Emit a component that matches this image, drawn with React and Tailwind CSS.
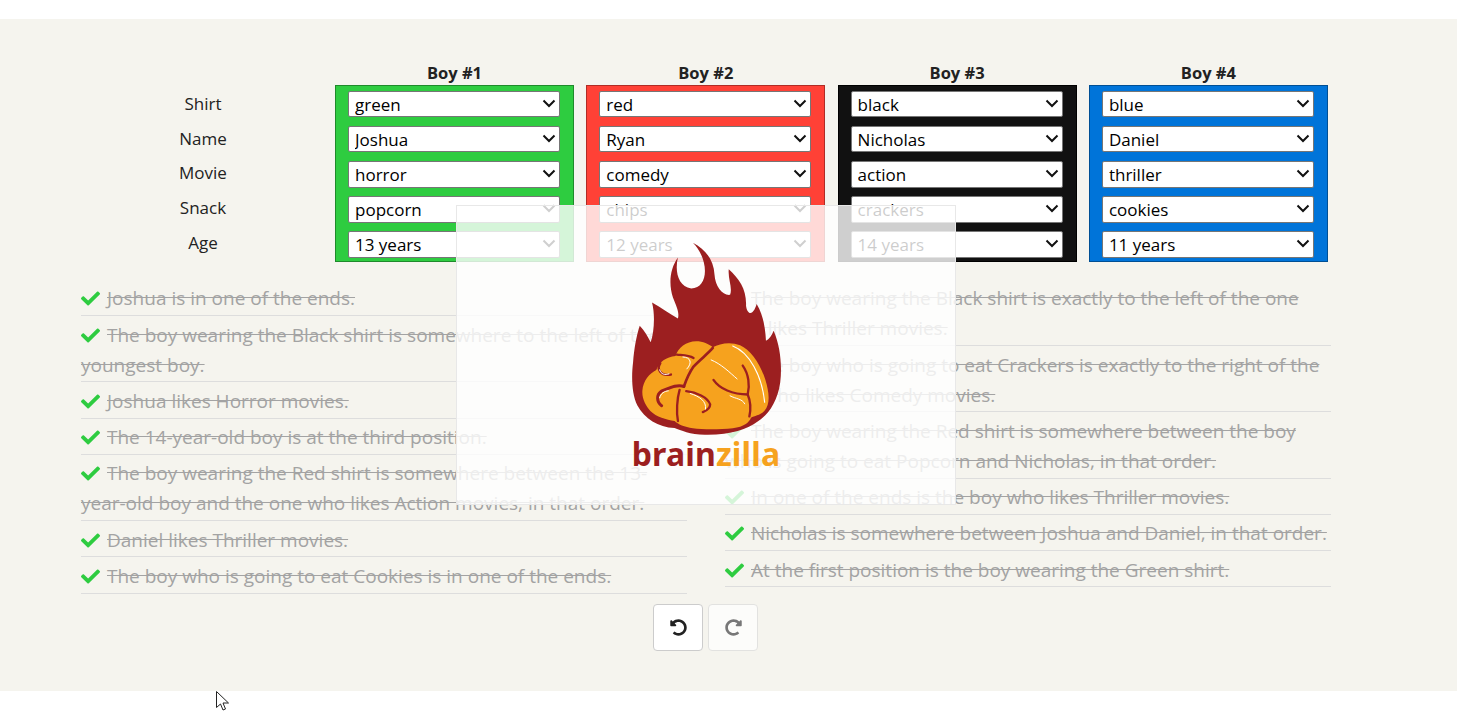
import React from "react";
import { FaCheck, FaUndoAlt, FaRedoAlt } from "react-icons/fa";

const labels = ["Shirt", "Name", "Movie", "Snack", "Age"];

const boys = [
  { title: "Boy #1", panel: "bg-[#2ecc40] border-[#1f8a2b]", values: ["green", "Joshua", "horror", "popcorn", "13 years"] },
  { title: "Boy #2", panel: "bg-[#ff4136] border-[#b02c25]", values: ["red", "Ryan", "comedy", "chips", "12 years"] },
  { title: "Boy #3", panel: "bg-[#111111] border-[#000000]", values: ["black", "Nicholas", "action", "crackers", "14 years"] },
  { title: "Boy #4", panel: "bg-[#0074d9] border-[#004f94]", values: ["blue", "Daniel", "thriller", "cookies", "11 years"] },
];

const leftClues = [
  "Joshua is in one of the ends.",
  "The boy wearing the Black shirt is somewhere to the left of the youngest boy.",
  "Joshua likes Horror movies.",
  "The 14-year-old boy is at the third position.",
  "The boy wearing the Red shirt is somewhere between the 13-year-old boy and the one who likes Action movies, in that order.",
  "Daniel likes Thriller movies.",
  "The boy who is going to eat Cookies is in one of the ends.",
];

const rightClues = [
  "The boy wearing the Black shirt is exactly to the left of the one who likes Thriller movies.",
  "The boy who is going to eat Crackers is exactly to the right of the boy who likes Comedy movies.",
  "The boy wearing the Red shirt is somewhere between the boy who is going to eat Popcorn and Nicholas, in that order.",
  "In one of the ends is the boy who likes Thriller movies.",
  "Nicholas is somewhere between Joshua and Daniel, in that order.",
  "At the first position is the boy wearing the Green shirt.",
];

const Pick = ({ value }) => (
  <div className="relative h-[26.8px] w-[212px]">
    <select
      defaultValue={value}
      className="h-full w-full appearance-none rounded-[2px] border border-[#767676] bg-white pl-[6px] text-[17px] leading-[25px] text-black"
    >
      <option>{value}</option>
    </select>
    <svg
      viewBox="0 0 14 9"
      className="pointer-events-none absolute right-[4px] top-[8px] h-[9px] w-[14px]"
      fill="none"
      stroke="#111"
      strokeWidth="2"
    >
      <path d="M1.5 1.5 7 7l5.5-5.5" />
    </svg>
  </div>
);

const Clue = ({ text }) => (
  <li className="border-b border-[#dddddd] pt-[3.4px] pb-[1.85px] text-[19px] leading-[30px] text-[#a3a3a3]">
    <FaCheck className="mr-[7px] inline-block h-[19px] w-[19px] align-[-3px] text-[#2ecc40]" />
    <span className="line-through">{text}</span>
  </li>
);

const Logo = () => (
  <div className="flex flex-col items-center">
    <svg viewBox="150 128 452 584" className="h-[194px] w-[151px]">
      <path
        fill="#9c1f20"
        d="M335 130C375 150 398 185 400 225C402 262 425 290 447 287C455 265 440 240 443 210C475 240 497 270 495 320C498 345 515 355 527 315C548 350 553 390 555 425C565 420 572 410 578 395C598 440 604 500 598 550C590 610 560 650 530 668C500 690 450 708 380 708C330 710 300 695 280 688C230 685 190 660 168 620C150 585 150 530 155 490C158 450 165 410 175 380C190 395 200 415 208 430C218 400 222 350 212 310C240 325 265 345 290 358C295 340 285 320 275 295C262 255 265 210 290 175C280 215 290 262 330 268C365 268 378 230 368 190C362 165 350 145 335 130Z"
      />
      <g transform="translate(165 405)">
        <path
          fill="#f6a21e"
          d="M18 170C20 140 40 118 60 108C68 85 90 68 118 66C125 42 150 22 180 22C200 22 218 30 230 40C250 28 285 22 312 34C350 50 385 110 395 165C400 190 400 215 385 232C372 245 355 245 345 252C338 268 325 278 290 284C250 288 200 288 170 284C145 280 125 272 115 262C90 258 60 250 42 232C28 215 16 195 18 170Z"
        />
        <g fill="none" stroke="#9c1f20" strokeLinecap="round" strokeLinejoin="round">
          <path strokeWidth="8" d="M230 42C215 60 190 78 172 98C158 118 150 138 143 158" />
          <path strokeWidth="7" d="M122 62C140 64 158 64 172 72" />
          <path strokeWidth="9" d="M143 158C120 150 95 165 75 172C60 182 60 205 76 216" />
          <path strokeWidth="7" d="M130 168C122 195 120 235 125 262" />
          <path strokeWidth="7" d="M150 172C180 175 215 190 222 212C222 222 212 230 200 235" />
          <path strokeWidth="7" d="M232 138C250 165 290 182 335 182C345 205 345 225 340 248" />
          <path strokeWidth="7" d="M320 95C338 120 342 155 335 182" />
          <path strokeWidth="7" d="M72 88C60 105 72 128 104 122" />
        </g>
        <g fill="none" stroke="#fff" strokeLinecap="round">
          <path strokeWidth="3.5" d="M290 36C340 55 378 125 386 205" />
          <path strokeWidth="3" d="M225 78C255 90 280 115 303 135" />
          <path strokeWidth="3" d="M140 69C165 70 168 88 152 105" />
          <path strokeWidth="3" d="M70 108C74 122 86 124 98 120" />
          <path strokeWidth="3" d="M70 192C74 178 84 172 96 171" />
          <path strokeWidth="3" d="M162 179C190 188 212 202 208 226" />
          <path strokeWidth="3" d="M282 186C300 196 318 194 326 210" />
        </g>
      </g>
    </svg>
    <div className="mt-[2px] font-['Noto_Sans',sans-serif] text-[32px] leading-[31px] font-bold tracking-[0.15px]">
      <span className="text-[#9c1f20]">brain</span>
      <span className="text-[#f6a21e]">zilla</span>
    </div>
  </div>
);

export default function App() {
  return (
    <div className="flex min-h-[712px] flex-col bg-white font-['Open_Sans','Noto_Sans',sans-serif]">
      <div className="h-[19px]" />
      <main className="relative flex h-[672px] flex-col bg-[#f5f4ee] pl-[81px] pt-[42px]">
        {/* Grid of selects */}
        <div className="flex">
          <div className="mr-[10px] flex w-[244px] flex-col pt-[25.8px]">
            {labels.map((label) => (
              <div key={label} className="h-[34.8px] text-center text-[17px] leading-[34px] text-[#222222]">
                {label}
              </div>
            ))}
          </div>
          <div className="flex gap-x-[12.3px]">
            {boys.map((boy) => (
              <div key={boy.title} className="flex w-[239px] flex-col">
                <div className="h-[24px] text-center text-[16.5px] leading-[24px] font-bold text-[#222222]">{boy.title}</div>
                <div className={`flex h-[177px] flex-col items-start gap-y-[8.3px] border pt-[4.6px] pl-[12px] ${boy.panel}`}>
                  {boy.values.map((v) => (
                    <Pick key={v} value={v} />
                  ))}
                </div>
              </div>
            ))}
          </div>
        </div>

        {/* Clues */}
        <div className="mt-[18px] flex gap-x-[38px]">
          <ul className="w-[606px]">
            {leftClues.map((c) => (
              <Clue key={c} text={c} />
            ))}
          </ul>
          <ul className="w-[606px]">
            {rightClues.map((c) => (
              <Clue key={c} text={c} />
            ))}
          </ul>
        </div>

        {/* Undo / redo */}
        <div className="mt-[10px] flex justify-center gap-x-[5px] pr-[127px]">
          <button className="flex h-[47px] w-[50px] items-center justify-center rounded-[4px] border border-[#cccccc] bg-white text-[#222222]">
            <FaUndoAlt className="h-[17px] w-[17px]" />
          </button>
          <button className="flex h-[47px] w-[50px] items-center justify-center rounded-[4px] border border-[#e2e2e0] bg-[#fcfcfa] text-[#777777]">
            <FaRedoAlt className="h-[17px] w-[17px]" />
          </button>
        </div>

        {/* Loading overlay */}
        <div className="absolute left-[456px] top-[186px] flex h-[300px] w-[500px] items-center justify-center border border-[#e8e8e8] bg-white/80">
          <Logo />
        </div>
      </main>

      {/* Mouse pointer */}
      <svg viewBox="0 0 16 21" className="absolute left-[216px] top-[691px] h-[21px] w-[16px]" fill="#fff" stroke="#222" strokeWidth="1">
        <path d="M.5.5v16l4-3.5 2.5 6 2.5-1-2.5-6h5.5z" />
      </svg>
    </div>
  );
}
